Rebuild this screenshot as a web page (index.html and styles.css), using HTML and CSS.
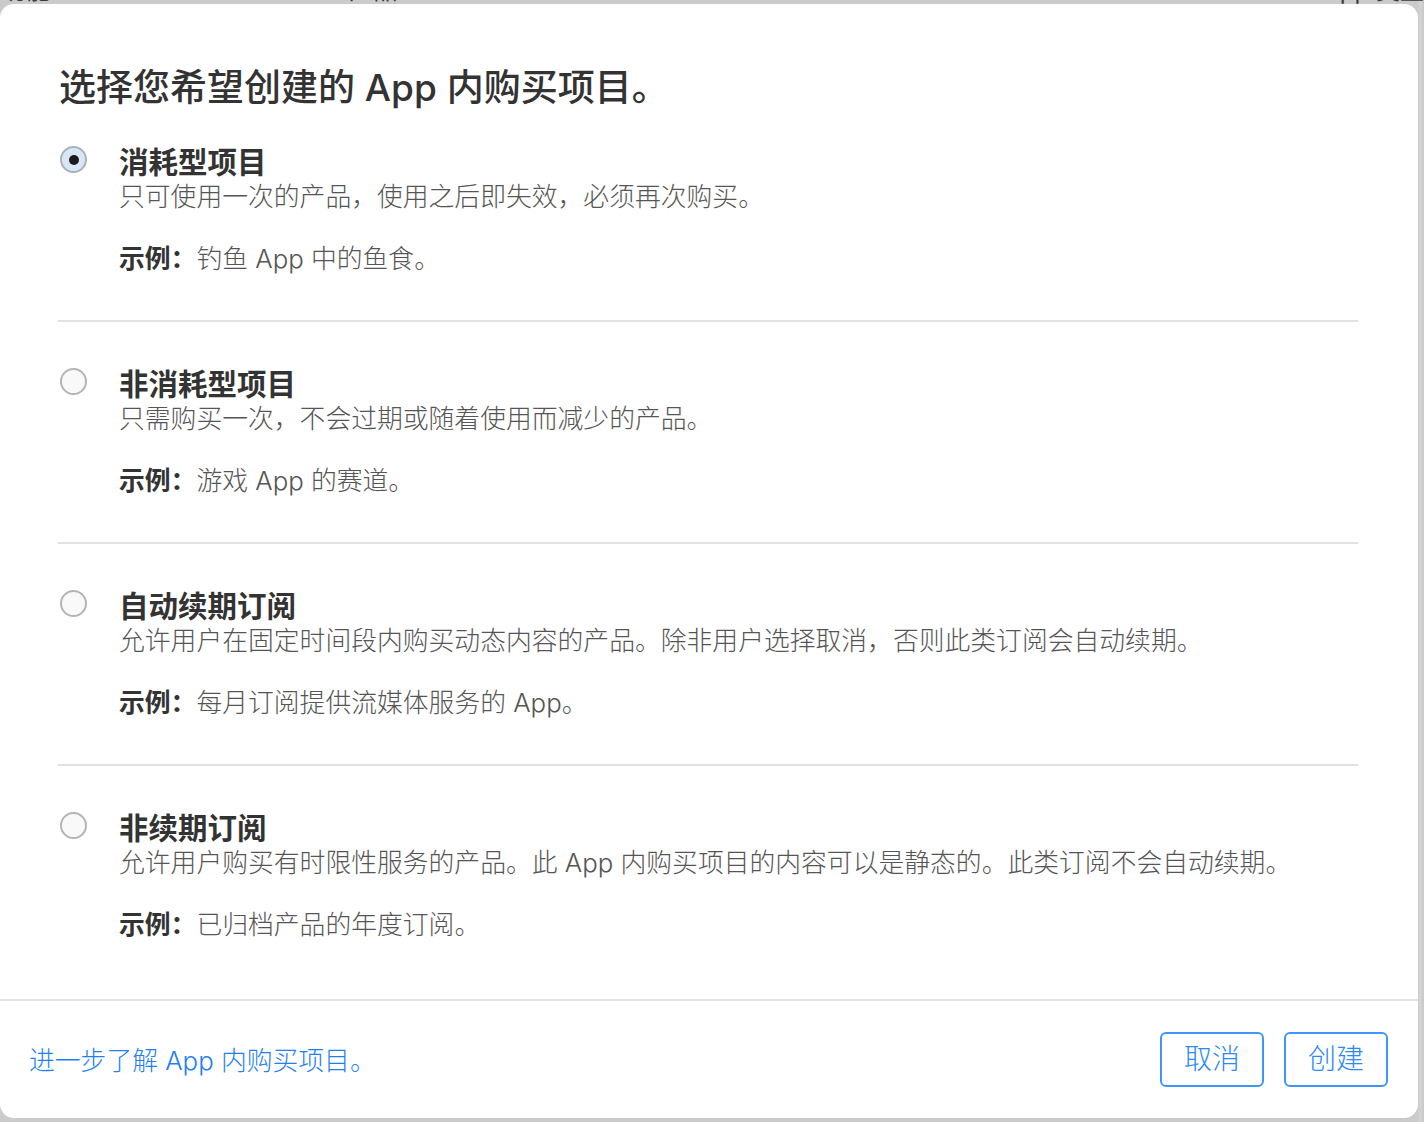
FILE: index.html
```html
<!DOCTYPE html>
<html lang="zh-CN">
<head>
<meta charset="utf-8">
<title>选择 App 内购买项目</title>
<link rel="stylesheet" href="styles.css">
</head>
<body>
<div class="page">
  <div class="backdrop-top">
    <div class="backdrop-row">
      <span class="bd-col bd-c1">功能</span>
      <span class="bd-col bd-c2">Reference Name</span>
      <span class="bd-col bd-c3">产品 ID</span>
      <span class="bd-col bd-c4">App 类型</span>
    </div>
  </div>
  <div class="modal">
    <div class="modal-body">
      <h1 class="modal-title">选择您希望创建的 App 内购买项目。</h1>
      <div class="options">
        <div class="option">
          <span class="radio radio-checked"><span class="radio-dot"></span></span>
          <div class="option-text">
            <div class="option-title">消耗型项目</div>
            <div class="option-desc">只可使用一次的产品，使用之后即失效，必须再次购买。</div>
            <div class="option-example"><b>示例：</b>钓鱼 App 中的鱼食。</div>
          </div>
        </div>
        <div class="option">
          <span class="radio"></span>
          <div class="option-text">
            <div class="option-title">非消耗型项目</div>
            <div class="option-desc">只需购买一次，不会过期或随着使用而减少的产品。</div>
            <div class="option-example"><b>示例：</b>游戏 App 的赛道。</div>
          </div>
        </div>
        <div class="option">
          <span class="radio"></span>
          <div class="option-text">
            <div class="option-title">自动续期订阅</div>
            <div class="option-desc">允许用户在固定时间段内购买动态内容的产品。除非用户选择取消，否则此类订阅会自动续期。</div>
            <div class="option-example"><b>示例：</b>每月订阅提供流媒体服务的 App。</div>
          </div>
        </div>
        <div class="option">
          <span class="radio"></span>
          <div class="option-text">
            <div class="option-title">非续期订阅</div>
            <div class="option-desc">允许用户购买有时限性服务的产品。此 App 内购买项目的内容可以是静态的。此类订阅不会自动续期。</div>
            <div class="option-example"><b>示例：</b>已归档产品的年度订阅。</div>
          </div>
        </div>
      </div>
    </div>
    <div class="modal-footer">
      <a class="learn-link" href="#">进一步了解 App 内购买项目。</a>
      <div class="actions">
        <button class="btn" type="button">取消</button>
        <button class="btn" type="button">创建</button>
      </div>
    </div>
  </div>
</div>
</body>
</html>
```

FILE: styles.css
```css
html, body {
  margin: 0;
  padding: 0;
}
body {
  background: #cbcbcb;
  overflow: hidden;
  font-family: Inter, "Noto Sans CJK SC", "Noto Sans", sans-serif;
  color: #333;
}
.page {
  width: 1424px;
  height: 1122px;
  display: flex;
  flex-direction: column;
  background: linear-gradient(to right, #cbcbcb 0, #cbcbcb 1418px, #d4d4d4 1420px, #c8c8c8 1424px);
}
.backdrop-top {
  height: 4px;
  overflow: hidden;
  flex: none;
}
.backdrop-row {
  display: flex;
  margin-top: -22px;
  height: 26px;
  font-size: 24px;
  line-height: 26px;
  color: #3a3a3a;
}
.bd-col { white-space: nowrap; }
.bd-c1 { width: 145px; padding-left: 2px; }
.bd-c2 { width: 210px; }
.bd-c3 { width: 995px; }
.bd-c4 { flex: 1; }

.modal {
  width: 1418px;
  height: 1114px;
  flex: none;
  background: #fff;
  border-radius: 14px;
  display: flex;
  flex-direction: column;
  overflow: hidden;
}
.modal-body {
  flex: 1;
  padding: 0 60px 0 58px;
}
.modal-title {
  margin: 0;
  padding-top: 62px;
  padding-left: 1px;
  font-size: 37px;
  line-height: 44px;
  font-weight: 500;
  color: #333;
}
.options {
  display: flex;
  flex-direction: column;
}
.option {
  display: flex;
  gap: 32px;
  padding: 43px 0 43px 1px;
  border-bottom: 2px solid #e2e2e2;
}
.option:first-child {
  padding-top: 33px;
}
.option:last-child {
  border-bottom: none;
}
.radio {
  flex: none;
  box-sizing: border-box;
  width: 27px;
  height: 27px;
  margin-top: 3px;
  margin-left: 1px;
  border-radius: 50%;
  border: 2px solid #b4b4b4;
  background: #f9f9f9;
  display: flex;
  align-items: center;
  justify-content: center;
}
.radio-checked {
  background: #d9e6f8;
  border-color: #a9b0ba;
}
.radio-dot {
  width: 10px;
  height: 10px;
  border-radius: 50%;
  background: #1b1b1b;
}
.option-text {
  display: flex;
  flex-direction: column;
}
.option-title {
  font-size: 29.5px;
  line-height: 38px;
  font-weight: 700;
  color: #333;
}
.option-desc {
  font-size: 25.8px;
  line-height: 32px;
  font-weight: 300;
  color: #555;
}
.option-example {
  margin-top: 28px;
  font-size: 25.8px;
  line-height: 36px;
  font-weight: 300;
  color: #555;
}
.option-example b {
  font-weight: 700;
  color: #333;
}
.modal-footer {
  flex: none;
  height: 117px;
  border-top: 2px solid #e2e2e2;
  display: flex;
  align-items: center;
  justify-content: space-between;
  padding: 0 30px 0 29px;
}
.learn-link {
  padding-top: 3px;
  font-size: 25.8px;
  line-height: 36px;
  font-weight: 300;
  color: #1f7ff3;
  text-decoration: none;
}
.actions {
  display: flex;
  gap: 20px;
}
.btn {
  box-sizing: border-box;
  height: 55px;
  padding: 0 22px;
  border: 2px solid #3f96f6;
  border-radius: 6px;
  background: #fff;
  color: #2d89f4;
  font-family: Inter, "Noto Sans CJK SC", "Noto Sans", sans-serif;
  font-size: 28px;
  font-weight: 300;
  line-height: 51px;
}
```
